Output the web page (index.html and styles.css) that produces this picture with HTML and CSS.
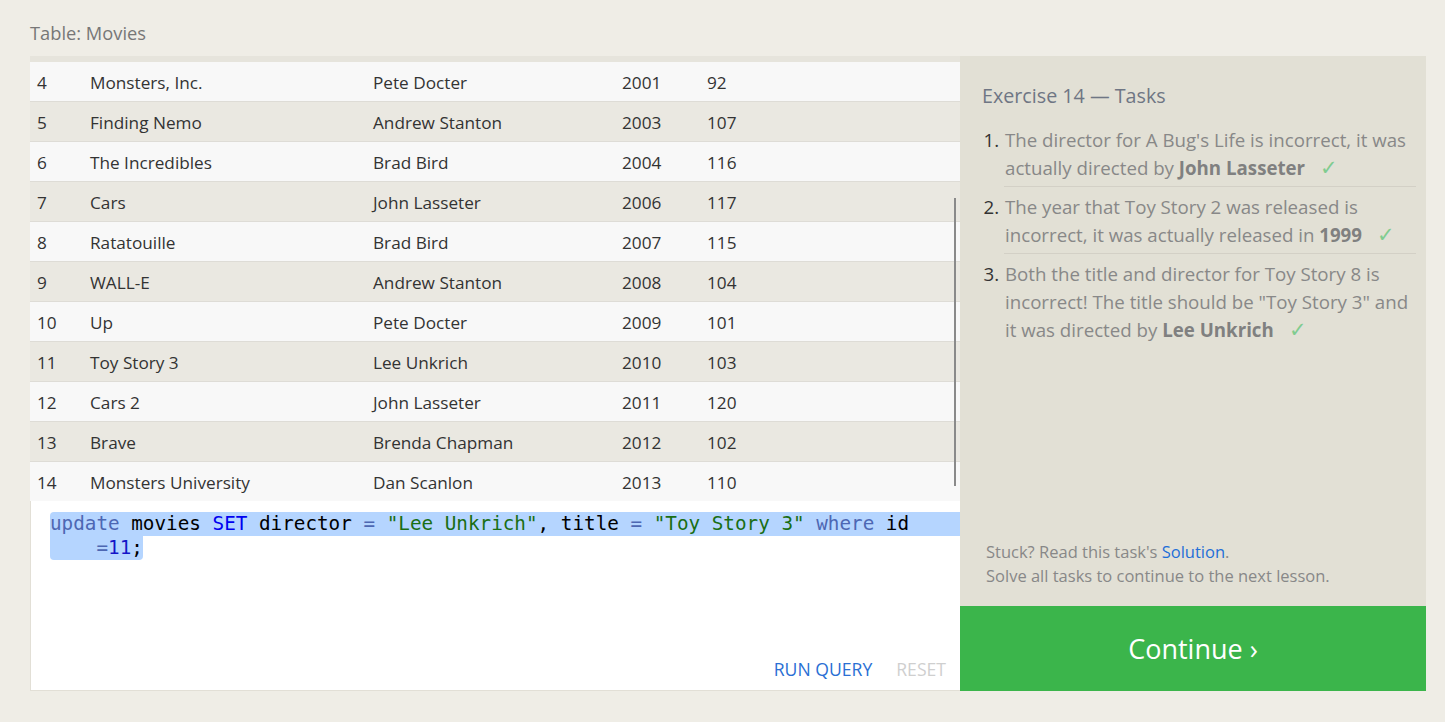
FILE: index.html
```html
<!DOCTYPE html>
<html>
<head>
<meta charset="utf-8">
<link rel="stylesheet" href="styles.css">
</head>
<body>
<div class="page">
  <div class="caption">Table: Movies</div>
  <div class="main">
    <div class="left">
      <div class="table-wrap">
        <div class="row"><span>4</span><span>Monsters, Inc.</span><span>Pete Docter</span><span>2001</span><span>92</span></div>
        <div class="row alt"><span>5</span><span>Finding Nemo</span><span>Andrew Stanton</span><span>2003</span><span>107</span></div>
        <div class="row"><span>6</span><span>The Incredibles</span><span>Brad Bird</span><span>2004</span><span>116</span></div>
        <div class="row alt"><span>7</span><span>Cars</span><span>John Lasseter</span><span>2006</span><span>117</span></div>
        <div class="row"><span>8</span><span>Ratatouille</span><span>Brad Bird</span><span>2007</span><span>115</span></div>
        <div class="row alt"><span>9</span><span>WALL-E</span><span>Andrew Stanton</span><span>2008</span><span>104</span></div>
        <div class="row"><span>10</span><span>Up</span><span>Pete Docter</span><span>2009</span><span>101</span></div>
        <div class="row alt"><span>11</span><span>Toy Story 3</span><span>Lee Unkrich</span><span>2010</span><span>103</span></div>
        <div class="row"><span>12</span><span>Cars 2</span><span>John Lasseter</span><span>2011</span><span>120</span></div>
        <div class="row alt"><span>13</span><span>Brave</span><span>Brenda Chapman</span><span>2012</span><span>102</span></div>
        <div class="row"><span>14</span><span>Monsters University</span><span>Dan Scanlon</span><span>2013</span><span>110</span></div>
        <div class="scroll-thumb"></div>
      </div>
      <div class="editor">
        <div class="code">
          <div class="line l1"><span class="kw">update</span> movies <span class="kw2">SET</span> director <span class="op">=</span> <span class="str">"Lee Unkrich"</span>, title <span class="op">=</span> <span class="str">"Toy Story 3"</span> <span class="kw">where</span> id</div>
          <div class="line l2"><span class="op">=</span><span class="num">11</span>;</div>
        </div>
        <div class="actions">
          <span class="run">RUN QUERY</span>
          <span class="reset">RESET</span>
        </div>
      </div>
    </div>
    <div class="right">
      <div class="tasks">
        <div class="tasks-title">Exercise 14 — Tasks</div>
        <ol class="task-list">
          <li>The director for A Bug's Life is incorrect, it was actually directed by <b>John Lasseter</b> <span class="check">✓</span></li>
          <li>The year that Toy Story 2 was released is incorrect, it was actually released in <b>1999</b> <span class="check">✓</span></li>
          <li>Both the title and director for Toy Story 8 is incorrect! The title should be "Toy Story 3" and it was directed by <b>Lee Unkrich</b> <span class="check">✓</span></li>
        </ol>
      </div>
      <div class="hint">
        <div>Stuck? Read this task's <span class="link">Solution</span>.</div>
        <div>Solve all tasks to continue to the next lesson.</div>
      </div>
      <div class="continue">Continue ›</div>
    </div>
  </div>
</div>
</body>
</html>
```

FILE: styles.css
```css
html, body {
  margin: 0;
  padding: 0;
}
body {
  background: #efede6;
  font-family: "Open Sans", "Noto Sans", sans-serif;
  color: #333;
}
.page {
  padding: 21px 19px 0 30px;
}
.caption {
  font-size: 18.3px;
  line-height: 24px;
  color: #777;
  height: 35px;
}
.main {
  display: flex;
  height: 635px;
}
.left {
  width: 930px;
  display: flex;
  flex-direction: column;
}
.table-wrap {
  position: relative;
  height: 439px;
  border-top: 6px solid #e6e4dc;
  overflow: hidden;
}
.row {
  display: grid;
  grid-template-columns: 53px 283px 249px 85px 1fr;
  padding: 2px 0 0 7px;
  height: 40px;
  align-items: center;
  background: #f8f8f8;
  border-bottom: 1px solid #dedcd6;
  box-sizing: border-box;
  font-size: 17.2px;
  color: #333;
}
.row.alt {
  background: #eae8e1;
}
.scroll-thumb {
  position: absolute;
  left: 924px;
  top: 136px;
  width: 2px;
  height: 288px;
  background: #8a8a8a;
}
.editor {
  flex: 1;
  background: #fff;
  border: 1px solid #e2dfd6;
  border-top: none;
  border-right: none;
  display: flex;
  flex-direction: column;
  overflow: hidden;
}
.code {
  padding: 11px 0 0 19px;
  font-family: "DejaVu Sans Mono", "Liberation Mono", monospace;
  font-size: 19.3px;
  line-height: 24px;
  color: #000;
}
.line {
  height: 24px;
  white-space: pre;
}
.l1 {
  background: #b5d5ff;
  border-radius: 4px 0 0 0;
}
.l2 {
  display: inline-block;
  vertical-align: top;
  background: #b5d5ff;
  padding-left: 4ch;
  border-radius: 0 0 4px 4px;
}
.kw { color: #4d67b3; }
.kw2 { color: #0000f0; }
.op { color: #4d67b3; }
.str { color: #1a6e14; }
.num { color: #1414c8; }
.actions {
  margin-top: auto;
  display: flex;
  justify-content: flex-end;
  gap: 24px;
  padding: 0 14px 9px 0;
  font-size: 17.6px;
  line-height: 24px;
}
.run { color: #2a6fd4; }
.reset { color: #cfcfcf; }
.right {
  width: 466px;
  background: #e2e0d5;
  display: flex;
  flex-direction: column;
}
.tasks {
  flex: 1;
  padding: 27px 10px 0 22px;
}
.tasks-title {
  font-size: 19.7px;
  line-height: 26px;
  color: #6f7684;
  margin-bottom: 17px;
}
.task-list {
  margin: 0;
  padding: 0 0 0 22px;
  font-size: 18.7px;
  line-height: 28px;
  color: #888;
}
.task-list li {
  padding: 0 0 4px 1px;
  margin-bottom: 6px;
  border-bottom: 1px solid #d3d0c6;
}
.task-list li:last-child {
  border-bottom: none;
}
.task-list li::marker {
  color: #333;
}
.task-list b {
  color: #808080;
}
.check {
  color: #80cc90;
  margin-left: 10px;
  font-size: 21px;
  line-height: 0;
}
.hint {
  padding: 0 10px 18px 26px;
  font-size: 16.5px;
  line-height: 24px;
  color: #888;
}
.link { color: #1f6fd8; }
.continue {
  height: 85px;
  background: #3bb54b;
  color: #fff;
  font-size: 27px;
  display: flex;
  align-items: center;
  justify-content: center;
}
```
